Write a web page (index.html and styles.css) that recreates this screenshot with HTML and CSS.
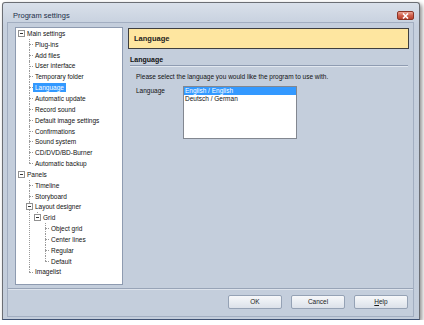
FILE: index.html
```html
<!DOCTYPE html>
<html>
<head>
    <meta charset="utf-8">
    <title>Program settings</title>
    <link rel="stylesheet" href="styles.css">
</head>
<body>
    <div class="window">
        <div class="titlebar">
            <span class="title">Program settings</span>
            <span class="close-btn">
                <svg width="7" height="6" viewBox="0 0 7 6"><path d="M1 0.5 L6 5.5 M6 0.5 L1 5.5" stroke="#fff" stroke-width="1.6"/></svg>
            </span>
        </div>
        <div class="client">
            <div class="main">
                <div class="tree-box">
                    <ul class="tree">
                        <li>
                            <div class="row"><span class="toggle"></span><span class="label">Main settings</span></div>
                            <ul>
                                <li><div class="row"><span class="twig"></span><span class="label">Plug-ins</span></div></li>
                                <li><div class="row"><span class="twig"></span><span class="label">Add files</span></div></li>
                                <li><div class="row"><span class="twig"></span><span class="label">User interface</span></div></li>
                                <li><div class="row"><span class="twig"></span><span class="label">Temporary folder</span></div></li>
                                <li><div class="row"><span class="twig"></span><span class="label selected">Language</span></div></li>
                                <li><div class="row"><span class="twig"></span><span class="label">Automatic update</span></div></li>
                                <li><div class="row"><span class="twig"></span><span class="label">Record sound</span></div></li>
                                <li><div class="row"><span class="twig"></span><span class="label">Default image settings</span></div></li>
                                <li><div class="row"><span class="twig"></span><span class="label">Confirmations</span></div></li>
                                <li><div class="row"><span class="twig"></span><span class="label">Sound system</span></div></li>
                                <li><div class="row"><span class="twig"></span><span class="label">CD/DVD/BD-Burner</span></div></li>
                                <li><div class="row"><span class="twig"></span><span class="label">Automatic backup</span></div></li>
                            </ul>
                        </li>
                        <li>
                            <div class="row"><span class="toggle"></span><span class="label">Panels</span></div>
                            <ul>
                                <li><div class="row"><span class="twig"></span><span class="label">Timeline</span></div></li>
                                <li><div class="row"><span class="twig"></span><span class="label">Storyboard</span></div></li>
                                <li>
                                    <div class="row"><span class="toggle"></span><span class="label">Layout designer</span></div>
                                    <ul>
                                        <li>
                                            <div class="row"><span class="toggle"></span><span class="label">Grid</span></div>
                                            <ul>
                                                <li><div class="row"><span class="twig"></span><span class="label">Object grid</span></div></li>
                                                <li><div class="row"><span class="twig"></span><span class="label">Center lines</span></div></li>
                                                <li><div class="row"><span class="twig"></span><span class="label">Regular</span></div></li>
                                                <li><div class="row"><span class="twig"></span><span class="label">Default</span></div></li>
                                            </ul>
                                        </li>
                                    </ul>
                                </li>
                                <li><div class="row"><span class="twig"></span><span class="label">Imagelist</span></div></li>
                            </ul>
                        </li>
                    </ul>
                </div>
                <div class="page">
                    <div class="page-header">Language</div>
                    <div class="group-title">Language</div>
                    <p class="hint">Please select the language you would like the program to use with.</p>
                    <div class="field">
                        <span class="field-label">Language</span>
                        <div class="listbox">
                            <div class="list-item selected">English / English</div>
                            <div class="list-item">Deutsch / German</div>
                        </div>
                    </div>
                </div>
            </div>
            <div class="button-bar">
                <span class="btn">OK</span>
                <span class="btn">Cancel</span>
                <span class="btn"><u>H</u>elp</span>
            </div>
        </div>
    </div>
</body>
</html>
```

FILE: styles.css
```css
body {
    margin: 0;
    background: #fff;
    font-family: "Liberation Sans", Arial, sans-serif;
    font-size: 6.5px;
    color: #111;
}
.window {
    box-sizing: border-box;
    width: 418px;
    height: 318px;
    margin: 2px 0 0 2px;
    border: 1px solid #6b6e74;
    border-bottom-color: #3f5274;
    border-radius: 3px 3px 0 0;
    background: linear-gradient(#d9e0ea, #c6d0de 22px, #c3cddb);
    box-shadow: 2px 2px 4px rgba(0, 0, 0, 0.45);
    display: flex;
    flex-direction: column;
}
.titlebar {
    height: 19px;
    display: flex;
    justify-content: space-between;
    align-items: flex-start;
    padding: 0 5px 0 10px;
}
.title {
    font-size: 7.5px;
    color: #1c2e48;
    margin-top: 8px;
}
.close-btn {
    box-sizing: border-box;
    width: 17px;
    height: 9px;
    margin-top: 8px;
    border: 1px solid #8c3526;
    border-radius: 2px;
    background: linear-gradient(#eba596, #d0604c 50%, #b8402c);
    display: flex;
    align-items: center;
    justify-content: center;
}
.client {
    flex: 1;
    margin: 0 5px 2px 4px;
    border: 1px solid #a2aec1;
    background: #c4cedc;
    display: flex;
    flex-direction: column;
}
.main {
    height: 266px;
    display: flex;
    align-items: flex-start;
    padding: 4px 0 0 7px;
    box-sizing: border-box;
    border-bottom: 1px solid #98a4b7;
}
.tree-box {
    box-sizing: border-box;
    width: 108px;
    height: 258px;
    border: 1px solid #8e9bb0;
    background: #fff;
    overflow: hidden;
}
.tree, .tree ul {
    list-style: none;
    margin: 0;
    padding: 0;
}
.tree {
    padding-left: 2px;
}
.tree ul {
    padding-left: 8px;
}
.tree ul > li {
    position: relative;
}
.tree ul > li::before {
    content: '';
    position: absolute;
    left: 3px;
    top: 0;
    bottom: 0;
    border-left: 1px dotted #9a9a9a;
}
.tree ul > li:last-child::before {
    bottom: auto;
    height: 5px;
}
.row {
    height: 10.85px;
    display: flex;
    align-items: center;
    position: relative;
    z-index: 1;
}
.toggle {
    box-sizing: border-box;
    width: 7px;
    height: 7px;
    border: 1px solid #919191;
    background: #fff;
    margin-right: 2px;
    position: relative;
    flex: none;
}
.toggle::after {
    content: '';
    position: absolute;
    left: 1px;
    top: 2px;
    width: 3px;
    height: 1px;
    background: #333;
}
.twig {
    width: 7px;
    align-self: stretch;
    margin-right: 2px;
    position: relative;
    flex: none;
}
.twig::before {
    content: '';
    position: absolute;
    left: 3px;
    right: 0;
    top: 5px;
    border-top: 1px dotted #9a9a9a;
}
.label {
    padding: 0 2px;
    margin-left: -2px;
    line-height: 9px;
    white-space: nowrap;
}
.label.selected {
    background: #3399ff;
    color: #fff;
}
.page {
    width: 281px;
    margin: 1px 0 0 5px;
}
.page-header {
    box-sizing: border-box;
    height: 21px;
    border: 1px solid #3f3f3f;
    background: #fee6a0;
    font-size: 7.5px;
    font-weight: bold;
    color: #222;
    line-height: 19px;
    padding-left: 5px;
}
.group-title {
    margin: 6px 1px 0 2px;
    font-size: 7px;
    font-weight: bold;
    line-height: 9px;
    padding-bottom: 1px;
    border-bottom: 1px solid #8f9cb2;
    box-shadow: 0 1px 0 #e2e8f0;
}
.hint {
    margin: 6px 0 0 8px;
    line-height: 9px;
}
.field {
    display: flex;
    margin: 5px 0 0 8px;
}
.field-label {
    width: 47px;
    line-height: 9px;
}
.listbox {
    box-sizing: border-box;
    width: 114px;
    height: 53px;
    border: 1px solid #828790;
    background: #fff;
}
.list-item {
    height: 8.3px;
    line-height: 8.3px;
    padding-left: 1px;
    white-space: nowrap;
}
.list-item.selected {
    background: #3399ff;
    color: #fff;
}
.button-bar {
    flex: 1;
    border-top: 1px solid #dde3ec;
    display: flex;
    justify-content: flex-end;
    align-items: flex-start;
    gap: 9px;
    padding: 5px 5px 0 0;
}
.btn {
    box-sizing: border-box;
    width: 54px;
    height: 14px;
    border: 1px solid #95a2b5;
    border-radius: 2px;
    background: linear-gradient(#f7f8fa, #e9edf2 50%, #dce1e9);
    text-align: center;
    line-height: 12px;
    color: #1a1a1a;
}
```
